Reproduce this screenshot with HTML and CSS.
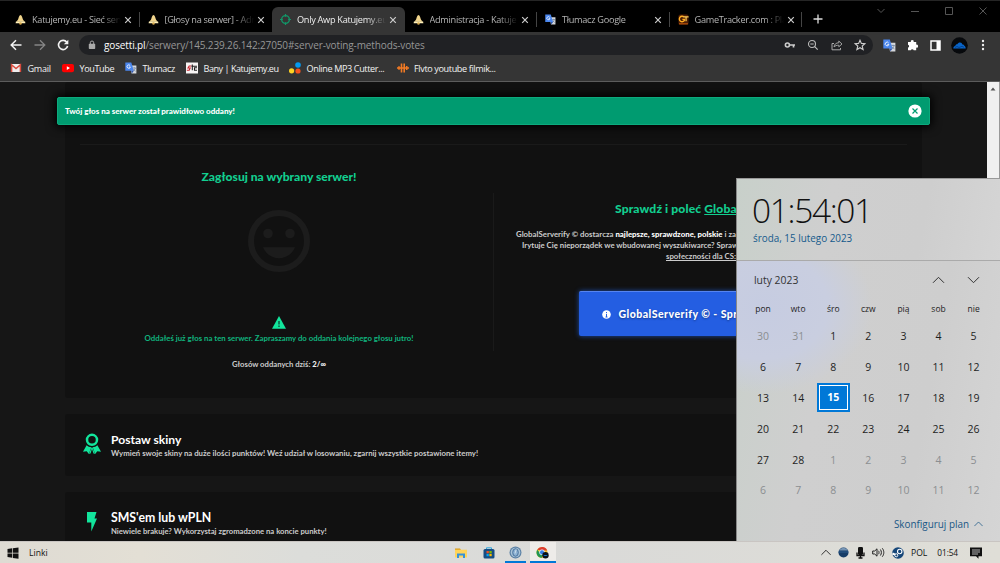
FILE: index.html
```
<!DOCTYPE html>
<html lang="pl">
<head>
    <meta charset="UTF-8" />
    <meta name="viewport" content="width=device-width, initial-scale=1" />
    <title>Only Awp Katujemy.eu</title>
    <link rel="stylesheet" href="styles.css">
</head>
<body>
    <!-- shared icons -->
    <svg class="defs" width="0" height="0">
        <symbol id="bell" viewBox="0 0 12 12">
            <path d="M6 1c1.500.5 1.900 2.300 2.300 4 .4 1.500 1.400 2.700 2.200 3.500h-9C2.300 7.700 3.300 6.500 3.700 5 4.100 3.300 4.500 1.500 6 1z" fill="#f0d48c"/>
            <path d="M1 8.300h10l.3 1.800H.7z" fill="#fff0b8"/>
            <circle cx="6" cy="10.300" r="1.400" fill="#d5a94f"/>
        </symbol>
        <symbol id="translate" viewBox="0 0 12 12">
            <path d="M5 3.500h6.400v8H6.500z" fill="#d5d8dc"/>
            <path d="M.3.500h6l2.500 8.300H.3z" fill="#4a86ee"/>
            <path d="M5.200 3.700a1.700 1.700 0 1 0 .2 1.300H4" fill="none" stroke="#fff" stroke-width=".8"/>
            <path d="M7.800 6h3M9.300 5.300V6M10.300 6c-.4 1.500-1.200 2.300-2 3M8.500 7.200l2 2.200" fill="none" stroke="#687d99" stroke-width=".7"/>
            <path d="M6.100 8.800h2.700l-1.900 2.600z" fill="#3157ad"/>
        </symbol>
        <symbol id="close" viewBox="0 0 8 8">
            <path d="M1.200 1.200l5.600 5.600M6.800 1.200L1.200 6.800" fill="none" stroke="currentColor" stroke-width="1.200"/>
        </symbol>
        <symbol id="up" viewBox="0 0 12 8">
            <path d="M.5 6.800L6 1.300l5.500 5.500" fill="none" stroke="currentColor"/>
        </symbol>
    </svg>

    <header class="browser">
        <div class="tabs">
            <div class="tab"><svg class="fav"><use href="#bell"/></svg><span>Katujemy.eu - Sieć serw</span><svg class="x"><use href="#close"/></svg></div>
            <div class="tab no-line"><svg class="fav"><use href="#bell"/></svg><span>[Głosy na serwer] - Adm</span><svg class="x"><use href="#close"/></svg></div>
            <div class="tab active"><svg class="fav" viewBox="0 0 12 12"><circle cx="6" cy="6" r="4.200" fill="none" stroke="#129668" stroke-width="1.500"/><path d="M6 0v3M6 9v3M0 6h3M9 6h3" stroke="#129668" stroke-width="1.300"/></svg><span>Only Awp Katujemy.eu</span><svg class="x"><use href="#close"/></svg></div>
            <div class="tab"><svg class="fav"><use href="#bell"/></svg><span>Administracja - Katuje</span><svg class="x"><use href="#close"/></svg></div>
            <div class="tab"><svg class="fav"><use href="#translate"/></svg><span>Tłumacz Google</span><svg class="x"><use href="#close"/></svg></div>
            <div class="tab"><svg class="fav" viewBox="0 0 12 12"><rect x=".5" y=".5" width="11" height="11" rx="2" fill="#4c1d05"/><path d="M6.500 3.200A3 3 0 1 0 7 7V5.800H4.800" fill="none" stroke="#ffad22" stroke-width="1.500"/><path d="M6 3.200h5.500M8.800 3.500V8" stroke="#ffd05b" stroke-width="1.300"/><path d="M1 10.800h10" stroke="#e1660d"/></svg><span>GameTracker.com : Pla</span><svg class="x"><use href="#close"/></svg></div>
            <svg class="new-tab" viewBox="0 0 10 10"><path d="M5 .5v9M.5 5h9" stroke="#ddd" stroke-width="1.300"/></svg>
            <div class="window-buttons">
                <svg width="10" height="8" viewBox="0 0 10 8"><path d="M1.500 2L5 5.500 8.500 2" fill="none" stroke="currentColor"/></svg>
                <svg width="8" height="8" viewBox="0 0 8 8"><path d="M0 4.500h8" stroke="currentColor"/></svg>
                <svg width="8" height="8" viewBox="0 0 8 8"><path d="M.5.500h7v7h-7z" fill="none" stroke="currentColor"/></svg>
                <svg width="8" height="8" viewBox="0 0 8 8"><path d="M.5.500l7 7M7.500.500l-7 7" stroke="currentColor"/></svg>
            </div>
        </div>
        <div class="toolbar">
            <div class="nav">
                <svg width="12" height="12" viewBox="0 0 12 12"><path d="M11.500 6H1.500M6 1.200L1.200 6 6 10.800" fill="none" stroke="#f4f4f4" stroke-width="1.500"/></svg>
                <svg width="12" height="12" viewBox="0 0 12 12"><path d="M.5 6h10M6 1.200L10.800 6 6 10.800" fill="none" stroke="#858585" stroke-width="1.300"/></svg>
                <svg width="12" height="12" viewBox="0 0 12 12"><path d="M9.800 3.200A4.600 4.600 0 1 0 10.600 7" fill="none" stroke="#f4f4f4" stroke-width="1.600"/><path d="M11.300.800v4.400H6.900z" fill="#f4f4f4"/></svg>
            </div>
            <div class="address">
                <svg class="lock" width="8" height="10" viewBox="0 0 8 10"><rect x=".8" y="3.800" width="6.400" height="5.200" rx=".7" fill="#aaa"/><path d="M2.300 4V2.700a1.700 1.700 0 0 1 3.400 0V4" fill="none" stroke="#aaa"/></svg>
                <span class="url"><b>gosetti.pl</b>/serwery/145.239.26.142:27050#server-voting-methods-votes</span>
                <div class="address-icons">
                    <svg width="12" height="12" viewBox="0 0 12 12"><circle cx="3.400" cy="6" r="2" fill="none" stroke="#ccc" stroke-width="1.600"/><path d="M5.500 6H11M9.500 6v2.500" fill="none" stroke="#ccc" stroke-width="1.700"/></svg>
                    <svg width="12" height="12" viewBox="0 0 12 12"><circle cx="5" cy="5" r="3.500" fill="none" stroke="#bbb" stroke-width="1.100"/><path d="M7.700 7.700l3 3M3.300 5h3.400" stroke="#bbb" stroke-width="1.200"/></svg>
                    <svg width="12" height="12" viewBox="0 0 12 12"><path d="M3 4.500H1v6.300h8.500V9" fill="none" stroke="#aaa"/><path d="M3 8c.4-3 2.200-4.200 4.800-4.200V2L11 5 7.800 7.800V6.200C5.600 6.200 4.200 6.800 3 8z" fill="none" stroke="#aaa" stroke-width=".9"/></svg>
                    <svg width="12" height="12" viewBox="0 0 12 12"><path d="M6 1.200l1.400 3.200 3.500.3-2.700 2.300.9 3.500L6 8.700l-3.100 1.800.9-3.500L1.100 4.700l3.500-.3z" fill="none" stroke="#ccc" stroke-width="1.100"/></svg>
                </div>
            </div>
            <div class="extensions">
                <svg width="13" height="13"><use href="#translate"/></svg>
                <svg width="12" height="12" viewBox="0 0 12 12"><path d="M1 3h2.800a1.500 1.500 0 1 1 2.900 0h2.500v2.700a1.500 1.500 0 1 1 0 2.900v2.700H6.700a1.500 1.500 0 0 0-2.900 0H1V8.600a1.500 1.500 0 0 0 0-2.900z" fill="#fff"/></svg>
                <svg width="11" height="11" viewBox="0 0 11 11"><path d="M1 1h9v9H1z" fill="#333" stroke="#fff" stroke-width="1.500"/><path d="M6.500 1H10v9H6.500z" fill="#fff"/></svg>
                <svg width="17" height="17" viewBox="0 0 17 17"><circle cx="8.500" cy="8.500" r="8.300" fill="#07090c"/><path d="M2.300 11.400c.1-1.500.8-2.200 1.900-2.500.3-1.300 1.200-1.800 2.100-1.700.7-1.200 1.700-1.700 2.800-1.600 1.200.1 2 .8 2.300 1.900 1.200 0 1.900.6 2.100 1.600.8.400 1.200 1.200 1.200 2.300z" fill="#0864c9"/><path d="M4 10.500l2-1 2 1 3-1.200 2 1" fill="none" stroke="#053677" stroke-width=".7"/></svg>
                <svg width="4" height="12" viewBox="0 0 4 12"><g fill="#eee"><circle cx="2" cy="2" r="1.200"/><circle cx="2" cy="6" r="1.200"/><circle cx="2" cy="10" r="1.200"/></g></svg>
            </div>
        </div>
        <div class="bookmarks">
            <div class="bm gmail"><svg viewBox="0 0 12 12"><path d="M1 2h10v8H1z" fill="#eee"/><path d="M1.600 10V2.800L6 6.500l4.400-3.700V10" fill="none" stroke="#d94b3d" stroke-width="1.500"/></svg><span>Gmail</span></div>
            <div class="bm youtube"><svg viewBox="0 0 12 12"><rect x="0" y="2" width="12" height="8.200" rx="2" fill="#f00"/><path d="M4.800 4.200v3.800L8 6.100z" fill="#fff"/></svg><span>YouTube</span></div>
            <div class="bm tlumacz"><svg><use href="#translate"/></svg><span>Tłumacz</span></div>
            <div class="bm bany"><svg viewBox="0 0 12 12"><path d="M0 .5h12v11H0z" fill="#f7f4f4"/><path d="M5.500 4H3.200L2 6h2.200L3.200 8.300H.800" fill="none" stroke="#c8222e" stroke-width="1.100"/><path d="M6.300 2.500v5.700M5.500 4.300h5.500M11 5.700H8.500v2.500H11" fill="none" stroke="#222" stroke-width="1.100"/></svg><span>Bany | Katujemy.eu</span></div>
            <div class="bm cutter"><svg viewBox="0 0 12 12"><circle cx="9" cy="3" r="2.800" fill="#049bf0"/><circle cx="2.600" cy="8.800" r="2.600" fill="#fed322"/><circle cx="9" cy="9" r="2.600" fill="#f4511d"/></svg><span>Online MP3 Cutter...</span></div>
            <div class="bm flvto"><svg viewBox="0 0 12 12"><path d="M2 4.200v3.600M4.500 1.500v9M7.200 1.500v9M9.700 4v4M0 6h12" stroke="#f27a24" stroke-width="1.600"/></svg><span>Flvto youtube filmik...</span></div>
        </div>
    </header>

    <div class="viewport">
        <main class="page">
            <section class="card vote">
                <div class="vote-left">
                    <h2>Zagłosuj na wybrany serwer!</h2>
                    <svg class="smile" viewBox="0 0 62 62"><circle cx="31" cy="31" r="28" fill="none" stroke="#1c1c1c" stroke-width="6"/><circle cx="20" cy="23.500" r="4.800" fill="#1c1c1c"/><circle cx="42" cy="23.500" r="4.800" fill="#1c1c1c"/><path d="M15 37.200h32c-3 7-9 11-16 11s-13-4-16-11z" fill="#1c1c1c"/></svg>
                    <svg class="warning" viewBox="0 0 14 13"><path d="M7 0l7 12.800H0z" fill="#12e59c"/><path d="M7 5v3.500M7 9.500V11" stroke="#0b5c41" stroke-width="1.500"/></svg>
                    <p class="voted">Oddałeś już głos na ten serwer. Zapraszamy do oddania kolejnego głosu jutro!</p>
                    <p class="count">Głosów oddanych dziś: <b>2/∞</b></p>
                </div>
                <div class="vote-right">
                    <h2>Sprawdź i poleć <u>Globa</u></h2>
                    <div class="about">
                        <p class="line-1">GlobalServerify © dostarcza <b>najlepsze, sprawdzone, polskie</b> i za</p>
                        <p class="line-2">Irytuje Cię nieporządek we wbudowanej wyszukiwarce? Spraw</p>
                        <p class="line-3"><u>społeczności dla CS:</u></p>
                    </div>
                    <a class="verify"><svg width="9" height="9" viewBox="0 0 9 9"><circle cx="4.500" cy="4.500" r="4.300" fill="#fff"/><path d="M4.500 2v1.200M4.500 4v3M3.500 7h2" stroke="#245ee2" stroke-width="1"/></svg><span>GlobalServerify © - Spr</span></a>
                </div>
            </section>
            <section class="card method">
                <svg width="20" height="22" viewBox="0 0 20 22"><circle cx="10" cy="6.800" r="5" fill="none" stroke="#12e59c" stroke-width="2.500"/><path d="M4.600 12.200c1.300 1.300 2.900 1.900 4.700 2L6.900 21 4.700 18.200 1 18.700zM15.400 12.200c-1.300 1.300-2.900 1.900-4.700 2L13.100 21l2.200-2.800 3.700.5z" fill="#12e59c"/><path d="M10 16l1.500 4.500L13 21l-2.500-6.500h-1L7 21l1.500-.5z" fill="#12e59c"/></svg>
                <div><h3>Postaw skiny</h3><p>Wymień swoje skiny na duże ilości punktów! Weź udział w losowaniu, zgarnij wszystkie postawione itemy!</p></div>
            </section>
            <section class="card method">
                <svg width="20" height="22" viewBox="0 0 20 22"><path d="M5 1h9.500l-2 6.500H15L9.300 20.500v-9H5z" fill="#12e59c"/></svg>
                <div><h3 class="sms">SMS'em lub wPLN</h3><p class="sms-text">Niewiele brakuje? Wykorzystaj zgromadzone na koncie punkty!</p></div>
            </section>
        </main>
        <div class="scrollbar"><svg width="6" height="4" viewBox="0 0 6 4"><path d="M3 .5L5.500 3.500h-5z" fill="#555"/></svg></div>
        <div class="alert">
            <span>Twój głos na serwer został prawidłowo oddany!</span>
            <svg width="14" height="14" viewBox="0 0 14 14"><circle cx="7" cy="7" r="6.600" fill="#fff"/><path d="M4.500 4.500l5 5M9.500 4.500l-5 5" stroke="#009b70" stroke-width="1.200"/></svg>
        </div>
    </div>

    <aside class="clock">
        <div class="clock-top">
            <div class="time">01:54:01</div>
            <div class="date">środa, 15 lutego 2023</div>
        </div>
        <div class="month">
            <span>luty 2023</span>
            <svg width="13" height="8"><use href="#up"/></svg>
            <svg class="down" width="13" height="8"><use href="#up"/></svg>
        </div>
        <div class="weekdays"><span>pon</span><span>wto</span><span>śro</span><span>czw</span><span>pią</span><span>sob</span><span>nie</span></div>
        <div class="days">
            <span class="off">30</span><span class="off">31</span><span>1</span><span>2</span><span>3</span><span>4</span><span>5</span>
            <span>6</span><span>7</span><span>8</span><span>9</span><span>10</span><span>11</span><span>12</span>
            <span>13</span><span>14</span><span class="today">15</span><span>16</span><span>17</span><span>18</span><span>19</span>
            <span>20</span><span>21</span><span>22</span><span>23</span><span>24</span><span>25</span><span>26</span>
            <span>27</span><span>28</span><span class="off">1</span><span class="off">2</span><span class="off">3</span><span class="off">4</span><span class="off">5</span>
            <span class="off">6</span><span class="off">7</span><span class="off">8</span><span class="off">9</span><span class="off">10</span><span class="off">11</span><span class="off">12</span>
        </div>
        <div class="agenda"><span>Skonfiguruj plan</span><svg width="9" height="6"><use href="#up"/></svg></div>
    </aside>

    <footer class="taskbar">
        <div class="start">
            <svg width="12" height="12" viewBox="0 0 12 12"><path d="M.5 2l4.700-.7v4.400H.5zM5.900 1.200L11.500.4v5.300H5.900zM.5 6.400h4.700v4.400L.5 10.100zM5.900 6.400h5.600v5.300l-5.600-.8z" fill="#111"/></svg>
            <span>Linki</span>
        </div>
        <div class="apps">
            <div><svg width="12" height="12" viewBox="0 0 12 12"><path d="M0 1.500h5l1 1.500H0z" fill="#d99b17"/><path d="M0 2.700h12v7.800H0z" fill="#ffd45a"/><path d="M2 11V6.500h8V11H8V8.500H4V11z" fill="#3792d9"/></svg></div>
            <div><svg width="12" height="12" viewBox="0 0 12 12"><path d="M3.500 2V.8h5V2" fill="none" stroke="#2da8df"/><rect x=".5" y="2" width="11" height="9.500" rx="1.500" fill="#174d83"/><path d="M3.500 4h2.300v2.300H3.500z" fill="#f25022"/><path d="M6.400 4h2.300v2.300H6.400z" fill="#7fba00"/><path d="M3.500 6.900h2.300v2.300H3.500z" fill="#00a4ef"/><path d="M6.400 6.900h2.300v2.300H6.400z" fill="#ffb900"/></svg></div>
            <div class="open"><svg width="13" height="13" viewBox="0 0 13 13"><circle cx="6.500" cy="6.500" r="6" fill="#5c82a6"/><circle cx="6.500" cy="6.500" r="4.800" fill="#a9c4d8"/><ellipse cx="6.500" cy="6.500" rx="2.800" ry="3.800" fill="#8db2d3" stroke="#406994" stroke-width=".9"/><path d="M7.200 3.500L6 7.500" stroke="#dbe8f0" stroke-width=".8"/></svg></div>
            <div class="open current"><svg width="13" height="13" viewBox="0 0 13 13"><circle cx="6" cy="6.500" r="5.500" fill="#f3c52b"/><path d="M1.200 3.800a5.500 5.500 0 0 1 10 .7H6z" fill="#dc3c32"/><path d="M1.200 3.800a5.500 5.500 0 0 0 4.300 8.200L7.500 8 4 7z" fill="#219653"/><circle cx="6" cy="6.300" r="2.500" fill="#347ee8" stroke="#fff" stroke-width=".7"/><circle cx="9.500" cy="9.300" r="3.200" fill="#09111b"/><path d="M7.500 10c.3-1.200 3.500-1.200 4 0z" fill="#1575d1"/></svg></div>
        </div>
        <div class="tray">
            <svg width="10" height="7"><use href="#up"/></svg>
            <svg width="11" height="11" viewBox="0 0 11 11"><circle cx="5.500" cy="5.500" r="5" fill="#163c67"/><path d="M1 3.500a5 5 0 0 1 9 0z" fill="#7694b4"/><path d="M.6 5h9.800" stroke="#2c5c8e"/></svg>
            <svg width="9" height="12" viewBox="0 0 9 12"><rect x="2" y="0" width="5" height="8" rx="1.300" fill="#111"/><path d="M1 5.500v3h7v-3M4.500 8.500V11M2.500 11h4" fill="none" stroke="#111" stroke-width="1.300"/></svg>
            <svg width="13" height="11" viewBox="0 0 13 11"><path d="M.7 4h2L5 1.800v7.400L2.700 7h-2z" fill="none" stroke="#222" stroke-width="1"/><path d="M6.500 3.800c.7 1 .7 2.400 0 3.400M8.400 2.500c1.300 1.800 1.300 4.200 0 6M10.300 1.300c2 2.500 2 5.900 0 8.400" fill="none" stroke="#222" stroke-width="1"/></svg>
            <svg width="12" height="12" viewBox="0 0 12 12"><circle cx="6" cy="6" r="5.800" fill="#164779"/><path d="M.4 6.500l4 1.700" stroke="#fff" stroke-width="2"/><circle cx="7.700" cy="4.500" r="2.200" fill="#164779" stroke="#fff" stroke-width="1.100"/><circle cx="4.300" cy="8.300" r="1.500" fill="#164779" stroke="#fff"/></svg>
            <span class="lang">POL</span>
            <span class="hour">01:54</span>
            <svg width="12" height="12" viewBox="0 0 12 12"><path d="M0 .5h12v8.800H8.500v2.500L6 9.300H0z" fill="#111"/><path d="M2 3h8M2 5h8M2 7h6" stroke="#ddd" stroke-width=".8"/></svg>
        </div>
    </footer>
</body>
</html>
```
FILE: styles.css
```
:root {
    --green: #12ce8f;
    --card: #111111;
    --page: #161616;
    --ui-font: "Open Sans", "Noto Sans", sans-serif;
    --page-font: Lato, "Open Sans", sans-serif;
}

* {
    box-sizing: border-box;
}

body {
    margin: 0;
    width: 1000px;
    height: 563px;
    display: flex;
    flex-direction: column;
    overflow: hidden;
    position: relative;
    background: var(--page);
    font-family: var(--ui-font);
    color: #eee;
}

h2, h3, p {
    margin: 0;
}

svg {
    display: block;
    flex: none;
}

.defs {
    position: absolute;
}

/* browser */
.browser {
    height: 82px;
    flex: none;
    background: #353535;
    border-bottom: 1px solid #5c5c5c;
}

.tabs {
    height: 32px;
    background: #000;
    border-top: 1px solid #252525;
    padding: 6px 0 0 7px;
    display: flex;
}

.tab {
    width: 132.5px;
    height: 25px;
    padding: 0 8px 0 8px;
    display: flex;
    align-items: center;
    font-size: 9.2px;
    letter-spacing: -0.3px;
    color: #b5b5b5;
    background: linear-gradient(#444, #444) right center / 1px 15px no-repeat;
}

.tab.no-line, .tab.active {
    background: none;
}

.tab.active {
    background: #353535;
    border-radius: 6px 6px 0 0;
    color: #eee;
}

.fav {
    width: 11px;
    height: 11px;
}

.tab span {
    width: 91px;
    margin: 0 1px 0 6px;
    white-space: nowrap;
    -webkit-mask-image: linear-gradient(90deg, #000 76%, transparent 98%);
    mask-image: linear-gradient(90deg, #000 76%, transparent 98%);
}

.x {
    width: 8px;
    height: 8px;
    color: #ccc;
}

.new-tab {
    width: 10px;
    height: 10px;
    margin: 7px 0 0 11px;
}

.window-buttons {
    display: flex;
    align-items: center;
    gap: 26px;
    margin: 0 13px 0 auto;
    height: 8px;
    color: #555;
}

.window-buttons svg:first-child {
    margin-right: -1px;
}

.toolbar {
    height: 26px;
    display: flex;
    align-items: center;
    padding-left: 10px;
}

.nav {
    display: flex;
    gap: 11.5px;
    width: 69px;
}

.address {
    width: 794px;
    height: 20px;
    border-radius: 10px;
    background: #202124;
    display: flex;
    align-items: center;
    padding: 0 7px 0 9px;
}

.url {
    margin-left: 8px;
    font-size: 10px;
    letter-spacing: -0.13px;
    color: #969696;
}

.url b {
    font-weight: 400;
    color: #fff;
}

.address-icons {
    display: flex;
    gap: 11.4px;
    margin-left: auto;
}

.extensions {
    display: flex;
    align-items: center;
    gap: 11px;
    margin-left: 10px;
}

.extensions svg:nth-child(4) {
    margin: 0 2px 0 -1px;
}

.bookmarks {
    display: flex;
    height: 20px;
    align-items: center;
    padding-left: 10px;
    font-size: 9.1px;
    color: #f2f2f2;
}

.bm {
    display: flex;
    align-items: center;
    gap: 5.5px;
    white-space: nowrap;
    letter-spacing: -0.38px;
}

.bm svg {
    width: 12px;
    height: 12px;
}

.gmail { width: 52px; letter-spacing: -0.3px; }
.youtube { width: 63px; }
.tlumacz { width: 61px; }
.bany { width: 103px; letter-spacing: -0.48px; }
.cutter { width: 107.5px; }

/* page */
.viewport {
    height: 459px;
    flex: none;
    display: flex;
    position: relative;
    overflow: hidden;
    font-family: var(--page-font);
}

.page {
    width: 987px;
    padding-left: 65px;
    display: flex;
    flex-direction: column;
    gap: 16px;
}

.scrollbar {
    width: 13px;
    background: #f0f0f0;
    border-right: 1px solid #999;
    display: flex;
    justify-content: center;
    padding-top: 5px;
}

.card {
    width: 857px;
    background: var(--card);
    border-radius: 3px;
    flex: none;
}

.alert {
    position: absolute;
    left: 57px;
    top: 15px;
    width: 873px;
    height: 28px;
    padding: 0 7px 0 7px;
    display: flex;
    justify-content: space-between;
    align-items: center;
    background: #009b70;
    border: 1px solid #0caa7d;
    border-radius: 2px;
    box-shadow: 0 0 10px 2px #000;
    color: #fff;
    font-size: 8px;
    font-weight: 900;
}

.vote {
    height: 316px;
    display: flex;
    padding-top: 62px;
    background: linear-gradient(#1a1a1a, #1a1a1a) 15px 62px / 827px 1px no-repeat var(--card);
}

.vote-left {
    width: 428px;
    padding-top: 24.5px;
    display: flex;
    flex-direction: column;
    align-items: center;
}

.vote-right {
    width: 243px;
    height: 158px;
    margin-top: 49px;
    border-left: 1px solid #1a1a1a;
    white-space: nowrap;
}

h2 {
    color: var(--green);
    font-size: 12.1px;
    line-height: 16px;
    font-weight: 900;
}

.smile {
    width: 62px;
    height: 62px;
    margin-top: 25px;
}

.warning {
    width: 14px;
    height: 13px;
    margin-top: 44px;
}

.voted {
    color: #10b47e;
    font-size: 7.8px;
    line-height: 10px;
    font-weight: 700;
    margin-top: 4.5px;
}

.count {
    font-size: 7.7px;
    line-height: 10px;
    font-weight: 700;
    color: #ccc;
    margin-top: 16px;
}

.count b {
    color: #eee;
}

.vote-right h2 {
    margin: 8px 0 0 121px;
    letter-spacing: 0.12px;
}

.about {
    font-size: 7.8px;
    line-height: 11px;
    font-weight: 700;
    color: #ccc;
    margin-top: 12px;
}

.about b {
    color: #fff;
    font-weight: 900;
}

.line-1 { padding-left: 22px; letter-spacing: 0.02px; }
.line-2 { padding-left: 28px; }
.line-3 { padding-left: 172px; }

.verify {
    display: flex;
    align-items: center;
    gap: 7.5px;
    width: 260px;
    height: 45px;
    margin: 29px 0 0 85px;
    padding-left: 23px;
    background: #245ee2;
    border-top: 1px solid #5684f0;
    border-radius: 2px;
    box-shadow: 0 0 5px #1e4da8;
    color: #fff;
    font-size: 10.5px;
    font-weight: 900;
    letter-spacing: 0.48px;
    text-shadow: 0 1px 2px #153a8d;
}

.method {
    height: 62px;
    padding: 18.500px 0 0 17px;
    display: flex;
    gap: 9px;
}

.method h3 {
    font-size: 12.1px;
    line-height: 14px;
    font-weight: 700;
    color: #fff;
}

.method p {
    font-size: 7.8px;
    line-height: 11px;
    font-weight: 700;
    color: #ccc;
    margin-top: 1px;
}

.method .sms {
    font-size: 12.3px;
}

.method .sms-text {
    font-size: 7.7px;
}

/* clock flyout over the page */
.clock {
    position: absolute;
    left: 736px;
    top: 178px;
    width: 264px;
    height: 363px;
    background:
        radial-gradient(ellipse 110px 88px at 25px 127px, #c6cce1 0%, #c9cee0 60%, transparent 100%),
        linear-gradient(100deg, #c8d0ca 0%, #cfcfcf 35%, #cecece 70%, #d5d5d5 100%);
    border-left: 1px solid #888;
    border-top: 1px solid #999;
    color: #1e1e1e;
    display: flex;
    flex-direction: column;
}

.clock-top {
    height: 82px;
    padding: 9px 0 0 15px;
    border-bottom: 1px solid #aaa;
    background: linear-gradient(100deg, #c8d0ca 0%, #cfcfcf 35%, #cecece 70%, #d5d5d5 100%);
}

.time {
    font-size: 33.5px;
    line-height: 45px;
    height: 43px;
    font-weight: 300;
    letter-spacing: -1.35px;
    white-space: nowrap;
    color: #111;
}

.date {
    padding-left: 1px;
    font-size: 9.9px;
    line-height: 14px;
    color: #155a8c;
}

.month {
    display: flex;
    align-items: center;
    height: 38px;
    padding: 0 20px 0 17px;
    font-size: 10.4px;
    color: #333;
}

.month span {
    margin-right: auto;
}

.month svg + svg {
    margin-left: 22px;
}

.down {
    transform: rotate(180deg);
}

.weekdays, .days {
    display: grid;
    grid-template-columns: repeat(7, 35.1px);
    padding-left: 8.5px;
    text-align: center;
}

.weekdays {
    font-size: 8.5px;
    height: 22px;
    line-height: 19px;
}

.days {
    grid-template-rows: repeat(6, 30.800px);
    align-items: center;
    font-size: 10.5px;
}

.off {
    color: #8b8e91;
}

.today {
    justify-self: center;
    width: 33px;
    height: 29px;
    line-height: 21px;
    background: #0078d7;
    border: 1px solid #0078d7;
    box-shadow: inset 0 0 0 1px #0078d7, inset 0 0 0 2px #fff;
    padding-top: 3px;
    color: #fff;
    font-weight: 700;
}

.agenda {
    display: flex;
    align-items: center;
    justify-content: flex-end;
    gap: 5px;
    padding-right: 17px;
    margin-top: 11px;
    font-size: 9.9px;
    color: #195785;
}

/* taskbar */
.taskbar {
    height: 22px;
    flex: none;
    display: flex;
    align-items: center;
    background: linear-gradient(90deg, #dedbd3, #e3dfd5 14%, #dcddda 30%, #dadad8 60%, #dfded7);
    border-top: 1px solid #c9c5c2;
    color: #111;
    font-size: 8.6px;
}

.start {
    width: 441px;
    padding-left: 7px;
    display: flex;
    align-items: center;
    gap: 10px;
}

.apps {
    display: flex;
    align-self: stretch;
    gap: 1px;
    padding-left: 7px;
}

.apps div {
    width: 26.400px;
    display: flex;
    align-items: center;
    justify-content: center;
}

.apps .open {
    border-bottom: 2px solid #0078d7;
}

.apps .open svg {
    margin-top: 2px;
}

.apps .open:nth-child(3) {
    width: 21px;
    margin: 0 2.5px;
}

.apps .current {
    background: #eeece9;
}

.tray {
    display: flex;
    align-items: center;
    margin-left: auto;
    padding-right: 18px;
    gap: 7px;
}

.tray svg:nth-child(2) {
    margin-left: 1px;
}

.tray svg:first-child {
    margin-right: -1px;
}

.hour {
    margin: 0 5px 0 3px;
    font-size: 8.3px;
    letter-spacing: -0.1px;
}
```
